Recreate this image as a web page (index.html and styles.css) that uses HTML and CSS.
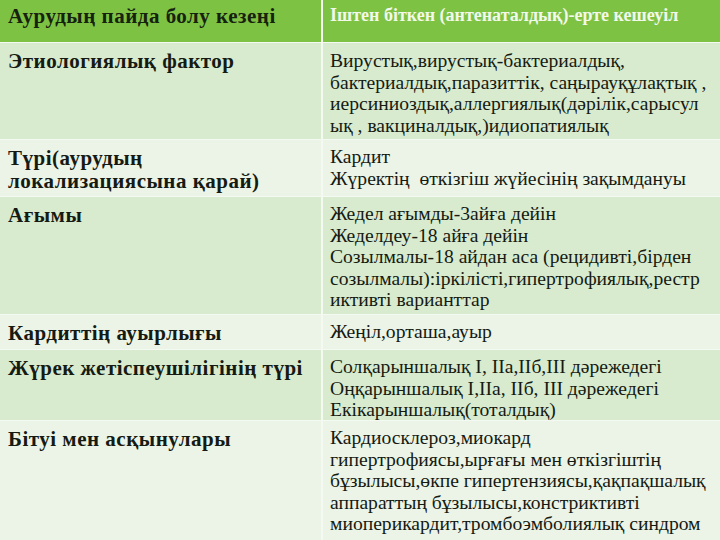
FILE: index.html
```html
<!DOCTYPE html>
<html lang="kk">
<head>
<meta charset="utf-8">
<link rel="stylesheet" href="styles.css">
</head>
<body>
<div class="table">
  <div class="cell head left">Аурудың пайда болу кезеңі</div>
  <div class="cell head right">Іштен біткен (антенаталдық)-ерте кешеуіл</div>

  <div class="cell odd left">Этиологиялық фактор</div>
  <div class="cell odd right">Вирустық,вирустық-бактериалдық,<br>бактериалдық,паразиттік, саңырауқұлақтық ,<br>иерсиниоздық,аллергиялық(дәрілік,сарысул<br>ық , вакциналдық,)идиопатиялық</div>

  <div class="cell even left">Түрі(аурудың<br>локализациясына қарай)</div>
  <div class="cell even right">Кардит<br>Жүректің&nbsp; өткізгіш жүйесінің зақымдануы</div>

  <div class="cell odd left">Ағымы</div>
  <div class="cell odd right">Жедел ағымды-3айға дейін<br>Жеделдеу-18 айға дейін<br>Созылмалы-18 айдан аса (рецидивті,бірден<br>созылмалы):іркілісті,гипертрофиялық,рестр<br>иктивті варианттар</div>

  <div class="cell even left">Кардиттің ауырлығы</div>
  <div class="cell even right">Жеңіл,орташа,ауыр</div>

  <div class="cell odd left">Жүрек жетіспеушілігінің түрі</div>
  <div class="cell odd right">Солқарыншалық I, IIа,IIб,III дәрежедегі<br>Оңқарыншалық I,IIа, IIб, III дәрежедегі<br>Екікарыншалық(тоталдық)</div>

  <div class="cell even left">Бітуі мен асқынулары</div>
  <div class="cell even right">Кардиосклероз,миокард<br>гипертрофиясы,ырғағы мен өткізгіштің<br>бұзылысы,өкпе гипертензиясы,қақпақшалық<br>аппараттың бұзылысы,констриктивті<br>миоперикардит,тромбоэмболиялық синдром</div>
</div>
</body>
</html>
```

FILE: styles.css
```css
html, body {
  margin: 0;
  padding: 0;
  background: #ffffff;
}

body {
  width: 720px;
  height: 540px;
  overflow: hidden;
  font-family: "Liberation Serif", "Times New Roman", serif;
}

.table {
  display: grid;
  grid-template-columns: 321px 1fr;
  grid-template-rows: 42px 96px 56px 117px 34px 70px 1fr;
  column-gap: 2px;
  row-gap: 1px;
  height: 540px;
  background: #f4f9f1;
}

.cell {
  white-space: nowrap;
  overflow: hidden;
  line-height: 21.6px;
  font-size: 19.6px;
  color: #151a12;
}

.left {
  padding: 7px 0 0 8px;
  font-weight: bold;
  font-size: 21px;
  letter-spacing: 0.5px;
  line-height: 22.5px;
}

.right {
  padding: 6px 0 0 7px;
}

.odd.right:nth-child(4) {
  padding-top: 7px;
}

.head {
  background: #7ec243;
  padding-top: 5px;
}

.head.left {
  color: #16220e;
}

.head.right {
  color: #f2f8ea;
  font-weight: bold;
  font-size: 18px;
}

.odd {
  background: #d8ebcf;
}

.even {
  background: #ebf4e7;
}
```
